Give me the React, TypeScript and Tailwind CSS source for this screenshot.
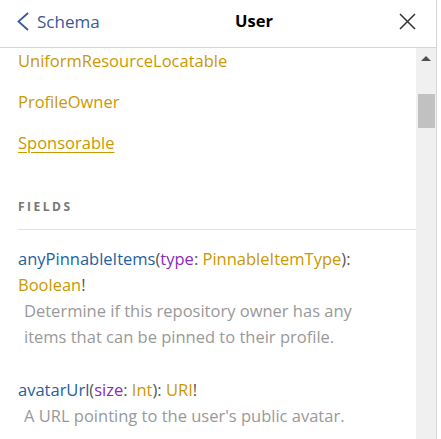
const font = { fontFamily: '"Open Sans", "Noto Sans", sans-serif' };

function Field({
  name,
  args,
  type,
  desc,
}: {
  name: string;
  args: { name: string; type: string }[];
  type: React.ReactNode;
  desc: string;
}) {
  return (
    <div className="text-[16.5px] leading-[26px]">
      <div>
        <span className="text-[#1f61a0]">{name}</span>
        {args.length > 0 && (
          <>
            <span className="text-[#555]">(</span>
            {args.map((a) => (
              <span key={a.name}>
                <span className="text-[#8b2bb9]">{a.name}</span>
                <span className="text-[#555]">: </span>
                <span className="text-[#ca9800]">{a.type}</span>
              </span>
            ))}
            <span className="text-[#555]">)</span>
          </>
        )}
        <span className="text-[#555]">: </span>
        {type}
      </div>
      <div className="pl-[6px] text-[#999]">{desc}</div>
    </div>
  );
}

export default function App() {
  return (
    <div className="w-[441px] h-[439px] bg-white overflow-hidden" style={font}>
      <div className="w-[437px] h-full border-r border-[#d6d6d6] flex flex-col">
        {/* Title bar */}
        <div className="h-[48px] shrink-0 border-b border-[#d6d6d6] flex items-center pb-[4px]">
          <div className="w-[130px] flex items-center pl-[17px] text-[#3b5998] text-[17px]">
            <svg width="12" height="19" viewBox="0 0 12 19" className="mr-[8px]">
              <polyline points="11,1 1.5,9.5 11,18" fill="none" stroke="#3b5998" strokeWidth="1.8" />
            </svg>
            <span>Schema</span>
          </div>
          <div className="flex-1 text-center font-bold text-[16.5px] text-black">User</div>
          <div className="w-[58px] flex justify-end pr-[20px]">
            <svg width="17" height="17" viewBox="0 0 17 17">
              <path d="M1 1 L16 16 M16 1 L1 16" stroke="#333" strokeWidth="1.5" fill="none" />
            </svg>
          </div>
        </div>

        {/* Body */}
        <div className="flex-1 flex min-h-0">
          <div className="flex-1 pl-[18px] overflow-hidden">
            <div className="flex flex-col gap-[15px] text-[16.5px] leading-[26px] text-[#ca9800]">
              <div>UniformResourceLocatable</div>
              <div>ProfileOwner</div>
              <div>
                <span className="underline underline-offset-[3px]">Sponsorable</span>
              </div>
            </div>

            <div className="mt-[43px] pb-[14px] border-b border-[#e0e0e0] text-[12px] leading-[16px] font-bold uppercase tracking-[2.5px] text-[#777]">
              Fields
            </div>

            <div className="mt-[16px] flex flex-col gap-[27px] pr-[30px]">
              <Field
                name="anyPinnableItems"
                args={[{ name: "type", type: "PinnableItemType" }]}
                type={
                  <>
                    <span className="text-[#ca9800]">Boolean</span>
                    <span className="text-[#555]">!</span>
                  </>
                }
                desc="Determine if this repository owner has any items that can be pinned to their profile."
              />
              <Field
                name="avatarUrl"
                args={[{ name: "size", type: "Int" }]}
                type={
                  <>
                    <span className="text-[#ca9800]">URI</span>
                    <span className="text-[#555]">!</span>
                  </>
                }
                desc="A URL pointing to the user's public avatar."
              />
            </div>
          </div>

          {/* Scrollbar */}
          <div className="w-[20px] bg-[#f0f0f0] flex flex-col items-center">
            <div className="mt-[8px] w-0 h-0 border-l-[5px] border-r-[5px] border-b-[5px] border-l-transparent border-r-transparent border-b-[#505050]" />
            <div className="mt-[33px] w-[17px] h-[34px] bg-[#c1c1c1]" />
          </div>
        </div>
      </div>
    </div>
  );
}
